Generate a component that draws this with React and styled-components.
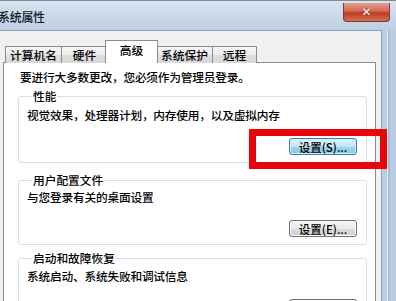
import React from "react";
import styled, { createGlobalStyle, css } from "styled-components";

const Global = createGlobalStyle`
  html, body { margin: 0; padding: 0; background: #c9d9ea; }
  body { font-family: "Noto Sans CJK SC", "Noto Sans", sans-serif; }
`;

const FONT = `"Noto Sans CJK SC", "Noto Sans CJK JP", sans-serif`;

const Frame = styled.div`
  width: 396px;
  height: 301px;
  overflow: hidden;
  display: flex;
  flex-direction: column;
  background: linear-gradient(90deg, #c3d4e6 0%, #d7e4f1 40%, #c6d7e9 70%, #b9cde2 100%);
  font-family: ${FONT};
`;

const TitleBar = styled.div`
  height: 30px;
  flex: none;
  display: flex;
  align-items: flex-start;
  border-top: 1px solid #7e8a98;
  box-sizing: border-box;
  background: linear-gradient(180deg, #d9e4f0 0%, #cbd9e9 45%, #c0d1e4 100%);
`;

const Title = styled.div`
  font-size: 12px;
  line-height: 14px;
  color: #0e1926;
  margin-left: -2px;
  margin-top: 9px;
  letter-spacing: -0.3px;
  font-weight: 500;
`;

const CloseButton = styled.div`
  margin-left: auto;
  margin-right: 6px;
  margin-top: 2px;
  width: 47px;
  height: 19px;
  box-sizing: border-box;
  border: 1px solid #7c3a34;
  border-top: none;
  border-radius: 0 0 4px 4px;
  background: linear-gradient(180deg, #e3a090 0%, #d26a56 45%, #bd3a22 55%, #d47256 100%);
  display: flex;
  align-items: center;
  justify-content: center;
  color: #fff;
  font-family: "DejaVu Sans", sans-serif;
  font-weight: bold;
  font-size: 12px;
  text-shadow: 0 0 2px #6a1c10;
`;

const Body = styled.div`
  flex: 1;
  display: flex;
  min-height: 0;
`;

const Client = styled.div`
  width: 382px;
  box-sizing: border-box;
  border-top: 1px solid #8f9daf;
  border-right: 1px solid #8f9daf;
  background: #f0f0f0;
  padding: 9px 5px 0 3px;
  display: flex;
  flex-direction: column;
`;

const RightFrame = styled.div`
  flex: 1;
  display: flex;
  justify-content: center;
`;

const FrameLine = styled.div`
  width: 2px;
  margin-left: -2px;
  background: #a9bdd3;
  border-left: 1px solid #e4edf6;
`;

const TabStrip = styled.div`
  display: flex;
  align-items: flex-end;
  padding-left: 2px;
  height: 23px;
  position: relative;
  z-index: 1;
  margin-bottom: -1px;
`;

const Tab = styled.div`
  width: ${(p) => p.$w}px;
  height: 17px;
  box-sizing: border-box;
  border: 1px solid #898c95;
  border-bottom: none;
  margin-right: -1px;
  display: flex;
  align-items: center;
  justify-content: center;
  font-size: 11.7px;
  line-height: 14px;
  color: #000;
  font-weight: 500;
  background: linear-gradient(180deg, #f5f5f5 0%, #ececec 50%, #dedede 51%, #d8d8d8 100%);
  ${(p) =>
    p.$active &&
    css`
      height: 23px;
      margin-left: -2px;
      margin-right: -2px;
      background: #fff;
      position: relative;
      z-index: 2;
      align-items: flex-start;
      padding-top: 2px;
    `}
`;

const Panel = styled.div`
  flex: 1;
  background: #fff;
  border: 1px solid #898c95;
  border-bottom: none;
  padding: 6px 8px 0 14px;
  display: flex;
  flex-direction: column;
`;

const Note = styled.div`
  font-size: 11.7px;
  line-height: 16px;
  color: #000;
  font-weight: 500;
  padding-left: 2px;
  letter-spacing: -0.2px;
`;

const Group = styled.fieldset`
  margin: ${(p) => p.$top}px 0 0 0;
  padding: ${(p) => p.$pad}px 9px 7px 8px;
  border: 1px solid #d5dfe5;
  border-radius: 3px;
  display: flex;
  flex-direction: column;
  min-width: 0;
`;

const Legend = styled.legend`
  font-size: 11.7px;
  line-height: 14px;
  color: #000;
  font-weight: 500;
  padding: 0 1px;
  margin-left: 5px;
`;

const GroupText = styled.div`
  font-size: 11.7px;
  line-height: 16px;
  color: #000;
  font-weight: 500;
  letter-spacing: -0.2px;
`;

const Button = styled.div`
  align-self: flex-end;
  margin-top: 15px;
  width: 68px;
  height: 17px;
  box-sizing: border-box;
  border: 1px solid #707070;
  border-radius: 3px;
  display: flex;
  align-items: center;
  justify-content: center;
  font-size: 11.5px;
  line-height: 14px;
  color: #000;
  font-weight: 500;
  background: linear-gradient(180deg, #f3f3f3 0%, #ebebeb 50%, #dddddd 51%, #cfcfcf 100%);
  box-shadow: inset 0 0 0 1px #fcfcfc;
  ${(p) =>
    p.$hot &&
    css`
      border-color: #3c7fb1;
      background: linear-gradient(180deg, #e2f3fb 0%, #c3e5f4 50%, #a2d5ec 51%, #86c7e3 100%);
      box-shadow: inset 0 0 0 1px #d4eef9;
    `}
`;

const Highlight = styled.div`
  position: absolute;
  left: 249px;
  top: 129px;
  width: 138px;
  height: 40px;
  box-sizing: border-box;
  border: 7px solid #e8060b;
  pointer-events: none;
`;

const Stage = styled.div`
  position: relative;
  width: 396px;
  height: 301px;
`;

export default function App() {
  const tabs = [
    { label: "计算机名", w: 57 },
    { label: "硬件", w: 47 },
    { label: "高级", w: 53, active: true },
    { label: "系统保护", w: 57 },
    { label: "远程", w: 45 },
  ];
  const groups = [
    { title: "性能", text: "视觉效果，处理器计划，内存使用，以及虚拟内存", btn: "设置(S)...", hot: true, top: 4, pad: 4 },
    { title: "用户配置文件", text: "与您登录有关的桌面设置", btn: "设置(E)...", top: 10, pad: 2 },
    { title: "启动和故障恢复", text: "系统启动、系统失败和调试信息", btn: "设置(T)...", top: 6, pad: 3 },
  ];
  return (
    <Stage>
      <Global />
      <Frame>
        <TitleBar>
          <Title>系统属性</Title>
          <CloseButton>✕</CloseButton>
        </TitleBar>
        <Body>
          <Client>
            <TabStrip>
              {tabs.map((t) => (
                <Tab key={t.label} $w={t.w} $active={t.active}>
                  {t.label}
                </Tab>
              ))}
            </TabStrip>
            <Panel>
              <Note>要进行大多数更改，您必须作为管理员登录。</Note>
              {groups.map((g) => (
                <Group key={g.title} $top={g.top} $pad={g.pad}>
                  <Legend>{g.title}</Legend>
                  <GroupText>{g.text}</GroupText>
                  <Button $hot={g.hot}>{g.btn}</Button>
                </Group>
              ))}
            </Panel>
          </Client>
          <RightFrame>
            <FrameLine />
          </RightFrame>
        </Body>
      </Frame>
      <Highlight />
    </Stage>
  );
}
